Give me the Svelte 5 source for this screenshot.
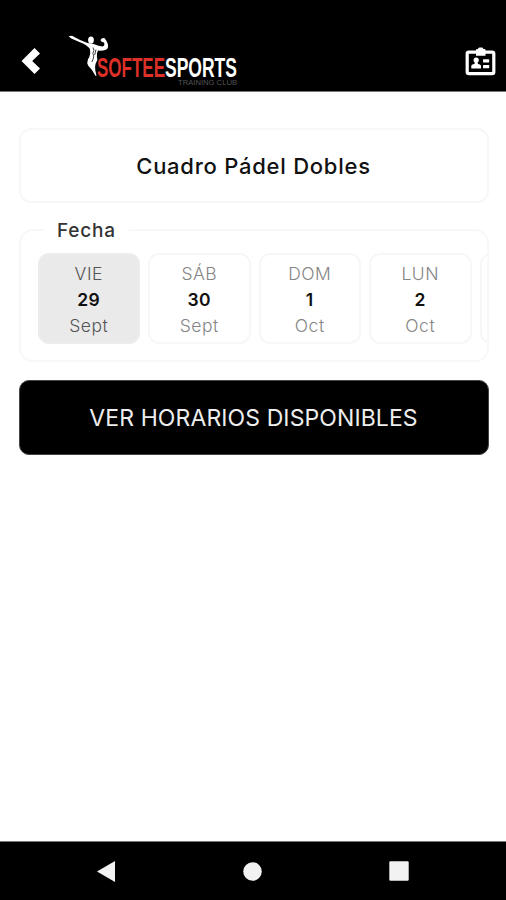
<script>
  const days = [
    { name: 'VIE', number: '29', month: 'Sept' },
    { name: 'SÁB', number: '30', month: 'Sept' },
    { name: 'DOM', number: '1', month: 'Oct' },
    { name: 'LUN', number: '2', month: 'Oct' },
    { name: 'MAR', number: '3', month: 'Oct' }
  ];
  let selected = $state(0);
</script>

<div class="screen">
  <header>
    <button class="back" aria-label="Volver">
      <svg width="19" height="26" viewBox="0 0 19 26"><path d="M13.5 0 L19 5.4 L11.2 13 L19 20.5 L13.5 26 L0.5 13Z" fill="#fff" /></svg>
    </button>
    <svg class="logo" width="172" height="54" viewBox="0 0 172 54" role="img" aria-label="Softee Sports Training Club">
      <g fill="#fff">
        <path d="M0.5 1.2 L4 .8 Q12 5.5 19.5 8 Q24 8.2 27 9.6 Q30 11.2 34.5 11.5 Q37.3 10.7 36 7.5 Q33.2 7 32.4 5 Q34 2.5 36.7 3.3 Q41 9 39.8 13 Q38 16.2 30 15.6 Q28.4 18 28.9 22 Q30 24.7 28.4 27 Q25.6 31 28.5 40.6 L27.6 41 Q24.6 34.7 20.1 30.4 Q18.6 27.7 20 24.2 Q23.4 19 21.7 13.5 Q18.5 9.7 12 7.2 L3.3 3.4Z" />
        <ellipse cx="23" cy="5" rx="2.9" ry="3.5" />
      </g>
      <path d="M25 12.5 Q27 15 24.8 18.5 Q27 21 23.8 27 M28 14.5 L26.7 20" fill="none" stroke="#111" stroke-width=".8" />
      <text class="brand red" x="29" y="42" textLength="68" lengthAdjust="spacingAndGlyphs">SOFTEE</text>
      <text class="brand" x="97" y="42" textLength="72" lengthAdjust="spacingAndGlyphs">SPORTS</text>
      <text class="club" x="110" y="50" textLength="59" lengthAdjust="spacingAndGlyphs">TRAINING CLUB</text>
    </svg>
    <button class="badge" aria-label="Carnet">
      <svg width="31" height="29" viewBox="0 0 31 29">
        <rect x="2.2" y="5.1" width="26.6" height="21.5" rx="1.7" fill="none" stroke="#fff" stroke-width="3.2" />
        <path d="M11 3 Q11 2 12 2 H13 Q13 .5 14.5 .5 H17 Q18.3 .5 18.3 2 H19.4 Q20.5 2 20.5 3 V8.7 H11Z" fill="#fff" />
        <circle cx="11.2" cy="13.1" r="2.6" fill="#fff" />
        <path d="M9.9 14 H12.5 L12.9 17 Q16 17.2 16 19.3 V21.5 H6.3 V19.3 Q6.3 17.2 9.5 17Z" fill="#fff" />
        <rect x="18" y="12.2" width="6.2" height="3.2" rx=".6" fill="#fff" />
        <rect x="18" y="18" width="6.2" height="3.2" rx=".6" fill="#fff" />
      </svg>
    </button>
  </header>

  <main>
    <div class="title"><span>Cuadro Pádel Dobles</span></div>
    <section class="date">
      <h2>Fecha</h2>
      <div class="days">
        {#each days as day, i}
          <button class="day" class:selected={selected === i} onclick={() => (selected = i)}>
            <span>{day.name}</span>
            <strong>{day.number}</strong>
            <span class="month">{day.month}</span>
          </button>
        {/each}
      </div>
    </section>
    <button class="submit">VER HORARIOS DISPONIBLES</button>
  </main>

  <nav>
    <svg width="18" height="21" viewBox="0 0 18 21"><path d="M0 10.5 L18 0 V21Z" fill="#f2f2f2" /></svg>
    <svg width="19" height="19" viewBox="0 0 19 19"><circle cx="9.5" cy="9.5" r="9.3" fill="#f2f2f2" /></svg>
    <svg width="20" height="20" viewBox="0 0 20 20"><rect x=".3" y=".3" width="19.4" height="19.4" rx="1.2" fill="#f2f2f2" /></svg>
  </nav>
</div>

<style>
  :global(body) { margin: 0; background: #fff; }
  * { box-sizing: border-box; }
  button { border: 0; padding: 0; margin: 0; background: none; font: inherit; cursor: pointer; }
  svg { display: block; flex: none; }
  .screen { height: 900px; width: 506px; display: flex; flex-direction: column; overflow: hidden; background: #fff; font-family: Inter, sans-serif; }
  header { height: 92px; flex: none; display: flex; align-items: flex-start; background: #000; border-bottom: 1px solid #777; padding: 35px 10px 0 21px; }
  .back { margin-top: 13px; }
  .logo { margin-left: 28px; }
  .badge { margin: 12px 0 0 auto; }
  .brand { font: bold 27px "Liberation Sans", sans-serif; fill: #fff; }
  .red { fill: #dc3029; }
  .club { font: 7.5px "Liberation Sans", sans-serif; fill: #555; }
  main { flex: 1; padding: 36px 17.5px 0 18.5px; display: flex; flex-direction: column; }
  .title { height: 75px; border: 2px solid #f7f7f7; border-radius: 12px; display: flex; align-items: center; justify-content: center; color: #111; font-size: 22px; font-weight: 500; letter-spacing: .75px; }
  .date { height: 133px; margin-top: 26px; border: 2px solid #f8f8f8; border-radius: 14px; padding-left: 17px; }
  h2 { margin: -14px 0 0 7px; width: 84px; height: 27px; line-height: 27px; text-align: center; background: #fff; color: #333; font-size: 19px; font-weight: 500; letter-spacing: .8px; }
  .days { display: flex; gap: 8px; overflow: hidden; margin-top: 9px; }
  .day { width: 102.5px; height: 91px; flex: none; display: flex; flex-direction: column; align-items: center; border: 2px solid #f7f7f7; border-radius: 11px; padding-top: 6px; color: #858585; font-size: 17.5px; line-height: 26px; letter-spacing: .5px; font-weight: 300; }
  .day.selected { background: #eaeaea; border-color: #ececec; color: #555; }
  strong { color: #111; font-weight: 600; }
  .submit { height: 75px; flex: none; margin-top: 18px; border: 1px solid #444; border-radius: 10px; background: #000; color: #eee; font-size: 23px; letter-spacing: .1px; }
  nav { height: 59px; flex: none; border-top: 1px solid #777; background: #000; display: flex; align-items: center; justify-content: space-between; padding: 0 97px; }
</style>
